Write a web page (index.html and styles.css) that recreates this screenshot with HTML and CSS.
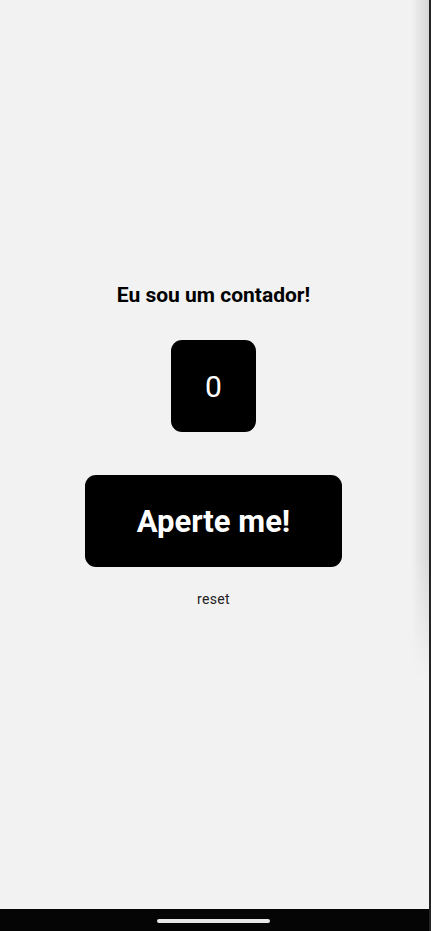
FILE: index.html
```html
<!DOCTYPE html>
<html lang="pt">
<head>
<meta charset="utf-8">
<title>Contador</title>
<link rel="stylesheet" href="styles.css">
</head>
<body>
<div class="screen">
  <div class="app">
    <main class="content">
      <h1 class="title">Eu sou um contador!</h1>
      <div class="counter">0</div>
      <button class="press">Aperte me!</button>
      <button class="reset">reset</button>
    </main>
    <div class="navbar"><span class="handle"></span></div>
  </div>
  <div class="edge"></div>
</div>
</body>
</html>
```
FILE: styles.css
```css
* { box-sizing: border-box; }
html, body { margin: 0; padding: 0; }
body {
  font-family: Roboto, "Noto Sans", sans-serif;
  background: #f2f2f2;
}
.screen {
  display: flex;
  width: 431px;
  height: 931px;
}
.app {
  flex: 1;
  display: flex;
  flex-direction: column;
  position: relative;
}
.app::after {
  content: "";
  position: absolute;
  top: 0;
  right: 0;
  width: 18px;
  height: 680px;
  background: linear-gradient(to right, rgba(0,0,0,0), rgba(0,0,0,0.11));
  -webkit-mask-image: linear-gradient(to bottom, #000 0, #000 560px, transparent 680px);
  mask-image: linear-gradient(to bottom, #000 0, #000 560px, transparent 680px);
  pointer-events: none;
}
.content {
  flex: 1;
  display: flex;
  flex-direction: column;
  align-items: center;
  padding-top: 283px;
  padding-right: 2px;
  background: #f2f2f2;
}
.title {
  margin: 0;
  font-size: 21px;
  line-height: 25px;
  font-weight: 700;
  color: #000;
}
.counter {
  margin-top: 32px;
  width: 85px;
  height: 92px;
  border-radius: 11px;
  background: #000;
  color: #fff;
  font-size: 30px;
  display: flex;
  align-items: center;
  justify-content: center;
}
.press {
  margin-top: 43px;
  width: 257px;
  height: 92px;
  border: 0;
  border-radius: 11px;
  background: #000;
  color: #fff;
  font-family: inherit;
  font-size: 31px;
  font-weight: 700;
  padding: 0;
}
.reset {
  margin-top: 22px;
  border: 0;
  background: transparent;
  padding: 0;
  font-family: inherit;
  font-size: 14px;
  line-height: 20px;
  color: #222;
  letter-spacing: 0.3px;
}
.navbar {
  height: 22px;
  background: #050505;
  display: flex;
  justify-content: center;
  padding-top: 10px;
  padding-right: 2px;
}
.handle {
  width: 113px;
  height: 4px;
  border-radius: 2px;
  background: #e8e8e8;
}
.edge {
  width: 2px;
  background: #232323;
}
```
